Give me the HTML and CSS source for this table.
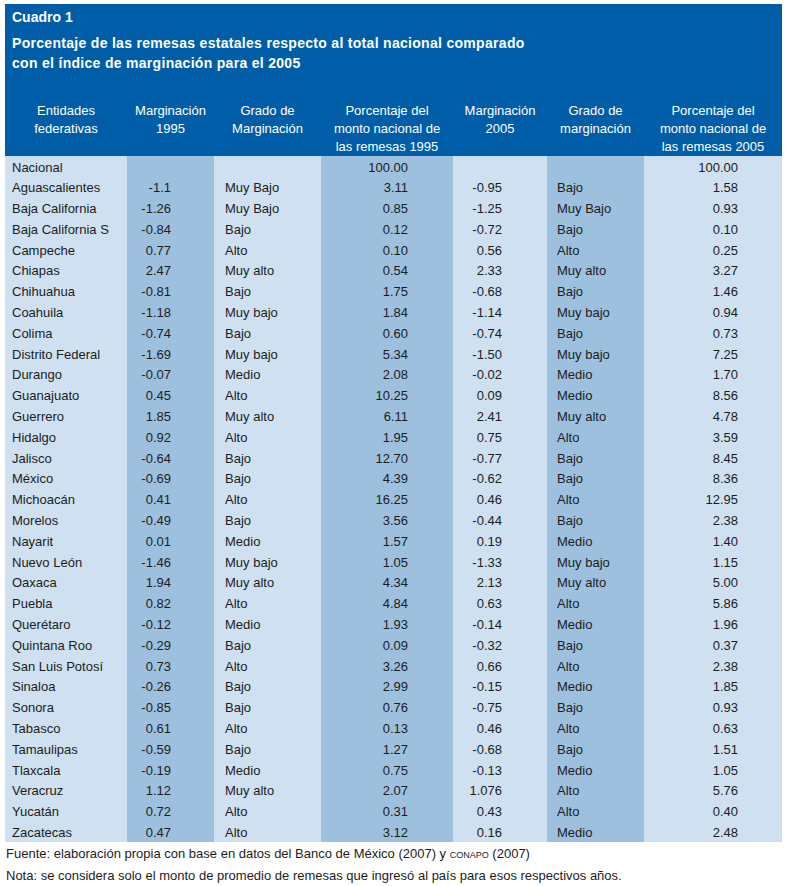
FILE: index.html
```html
<!DOCTYPE html>
<html lang="es">
<head>
<meta charset="utf-8">
<title>Cuadro 1</title>
<link rel="stylesheet" href="styles.css">
</head>
<body>
<div class="figure">
  <div class="title-block">
    <div class="label">Cuadro 1</div>
    <div class="title">Porcentaje de las remesas estatales respecto al total nacional comparado<br>con el índice de marginación para el 2005</div>
  </div>
  <table class="data">
    <colgroup>
      <col class="c1"><col class="c2"><col class="c3"><col class="c4"><col class="c5"><col class="c6"><col class="c7">
    </colgroup>
    <thead>
      <tr>
        <th>Entidades<br>federativas</th>
        <th>Marginación<br>1995</th>
        <th>Grado de<br>Marginación</th>
        <th>Porcentaje del<br>monto nacional de<br>las remesas 1995</th>
        <th>Marginación<br>2005</th>
        <th>Grado de<br>marginación</th>
        <th>Porcentaje del<br>monto nacional de<br>las remesas 2005</th>
      </tr>
    </thead>
    <tbody>
      <tr><td>Nacional</td><td></td><td></td><td>100.00</td><td></td><td></td><td>100.00</td></tr>
      <tr><td>Aguascalientes</td><td>-1.1</td><td>Muy Bajo</td><td>3.11</td><td>-0.95</td><td>Bajo</td><td>1.58</td></tr>
      <tr><td>Baja California</td><td>-1.26</td><td>Muy Bajo</td><td>0.85</td><td>-1.25</td><td>Muy Bajo</td><td>0.93</td></tr>
      <tr><td>Baja California S</td><td>-0.84</td><td>Bajo</td><td>0.12</td><td>-0.72</td><td>Bajo</td><td>0.10</td></tr>
      <tr><td>Campeche</td><td>0.77</td><td>Alto</td><td>0.10</td><td>0.56</td><td>Alto</td><td>0.25</td></tr>
      <tr><td>Chiapas</td><td>2.47</td><td>Muy alto</td><td>0.54</td><td>2.33</td><td>Muy alto</td><td>3.27</td></tr>
      <tr><td>Chihuahua</td><td>-0.81</td><td>Bajo</td><td>1.75</td><td>-0.68</td><td>Bajo</td><td>1.46</td></tr>
      <tr><td>Coahuila</td><td>-1.18</td><td>Muy bajo</td><td>1.84</td><td>-1.14</td><td>Muy bajo</td><td>0.94</td></tr>
      <tr><td>Colima</td><td>-0.74</td><td>Bajo</td><td>0.60</td><td>-0.74</td><td>Bajo</td><td>0.73</td></tr>
      <tr><td>Distrito Federal</td><td>-1.69</td><td>Muy bajo</td><td>5.34</td><td>-1.50</td><td>Muy bajo</td><td>7.25</td></tr>
      <tr><td>Durango</td><td>-0.07</td><td>Medio</td><td>2.08</td><td>-0.02</td><td>Medio</td><td>1.70</td></tr>
      <tr><td>Guanajuato</td><td>0.45</td><td>Alto</td><td>10.25</td><td>0.09</td><td>Medio</td><td>8.56</td></tr>
      <tr><td>Guerrero</td><td>1.85</td><td>Muy alto</td><td>6.11</td><td>2.41</td><td>Muy alto</td><td>4.78</td></tr>
      <tr><td>Hidalgo</td><td>0.92</td><td>Alto</td><td>1.95</td><td>0.75</td><td>Alto</td><td>3.59</td></tr>
      <tr><td>Jalisco</td><td>-0.64</td><td>Bajo</td><td>12.70</td><td>-0.77</td><td>Bajo</td><td>8.45</td></tr>
      <tr><td>México</td><td>-0.69</td><td>Bajo</td><td>4.39</td><td>-0.62</td><td>Bajo</td><td>8.36</td></tr>
      <tr><td>Michoacán</td><td>0.41</td><td>Alto</td><td>16.25</td><td>0.46</td><td>Alto</td><td>12.95</td></tr>
      <tr><td>Morelos</td><td>-0.49</td><td>Bajo</td><td>3.56</td><td>-0.44</td><td>Bajo</td><td>2.38</td></tr>
      <tr><td>Nayarit</td><td>0.01</td><td>Medio</td><td>1.57</td><td>0.19</td><td>Medio</td><td>1.40</td></tr>
      <tr><td>Nuevo León</td><td>-1.46</td><td>Muy bajo</td><td>1.05</td><td>-1.33</td><td>Muy bajo</td><td>1.15</td></tr>
      <tr><td>Oaxaca</td><td>1.94</td><td>Muy alto</td><td>4.34</td><td>2.13</td><td>Muy alto</td><td>5.00</td></tr>
      <tr><td>Puebla</td><td>0.82</td><td>Alto</td><td>4.84</td><td>0.63</td><td>Alto</td><td>5.86</td></tr>
      <tr><td>Querétaro</td><td>-0.12</td><td>Medio</td><td>1.93</td><td>-0.14</td><td>Medio</td><td>1.96</td></tr>
      <tr><td>Quintana Roo</td><td>-0.29</td><td>Bajo</td><td>0.09</td><td>-0.32</td><td>Bajo</td><td>0.37</td></tr>
      <tr><td>San Luis Potosí</td><td>0.73</td><td>Alto</td><td>3.26</td><td>0.66</td><td>Alto</td><td>2.38</td></tr>
      <tr><td>Sinaloa</td><td>-0.26</td><td>Bajo</td><td>2.99</td><td>-0.15</td><td>Medio</td><td>1.85</td></tr>
      <tr><td>Sonora</td><td>-0.85</td><td>Bajo</td><td>0.76</td><td>-0.75</td><td>Bajo</td><td>0.93</td></tr>
      <tr><td>Tabasco</td><td>0.61</td><td>Alto</td><td>0.13</td><td>0.46</td><td>Alto</td><td>0.63</td></tr>
      <tr><td>Tamaulipas</td><td>-0.59</td><td>Bajo</td><td>1.27</td><td>-0.68</td><td>Bajo</td><td>1.51</td></tr>
      <tr><td>Tlaxcala</td><td>-0.19</td><td>Medio</td><td>0.75</td><td>-0.13</td><td>Medio</td><td>1.05</td></tr>
      <tr><td>Veracruz</td><td>1.12</td><td>Muy alto</td><td>2.07</td><td>1.076</td><td>Alto</td><td>5.76</td></tr>
      <tr><td>Yucatán</td><td>0.72</td><td>Alto</td><td>0.31</td><td>0.43</td><td>Alto</td><td>0.40</td></tr>
      <tr><td>Zacatecas</td><td>0.47</td><td>Alto</td><td>3.12</td><td>0.16</td><td>Medio</td><td>2.48</td></tr>
    </tbody>
  </table>
  <div class="notes">
    <p>Fuente: elaboración propia con base en datos del Banco de México (2007) y <span class="sc">conapo</span> (2007)</p>
    <p>Nota: se considera solo el monto de promedio de remesas que ingresó al país para esos respectivos años.</p>
  </div>
</div>
</body>
</html>
```
FILE: styles.css
```css
html, body {
  margin: 0;
  padding: 0;
  background: #ffffff;
}
body {
  font-family: "Liberation Sans", Arial, Helvetica, sans-serif;
  font-size: 13px;
  color: #1c1c1c;
}
.figure {
  width: 777px;
  padding: 4px 0 0 5px;
}
.title-block {
  background: #005ea8;
  color: #ffffff;
  font-weight: bold;
  padding: 3px 7px 0 7px;
  height: 77px;
  box-sizing: border-box;
}
.label {
  font-size: 14px;
  line-height: 20px;
}
.title {
  font-size: 14px;
  letter-spacing: 0.3px;
  line-height: 20px;
  margin-top: 6px;
}
.data {
  width: 777px;
  border-collapse: collapse;
  table-layout: fixed;
}
.c1 { width: 122px; }
.c2 { width: 87px; }
.c3 { width: 107px; }
.c4 { width: 132px; }
.c5 { width: 94px; }
.c6 { width: 97px; }
.c7 { width: 138px; }
.data thead th {
  background: #005ea8;
  color: #ffffff;
  font-weight: normal;
  font-size: 13px;
  line-height: 18px;
  text-align: center;
  vertical-align: top;
  height: 53.5px;
  padding: 20.5px 0 0 0;
}
.data tbody td {
  height: 16.8px;
  padding: 4px 0 0 0;
  line-height: 16.8px;
  white-space: nowrap;
  background: #cfe1f0;
}
.data tbody td:nth-child(2),
.data tbody td:nth-child(4),
.data tbody td:nth-child(6) {
  background: #9cc0de;
}
.data tbody td:nth-child(1) { padding-left: 7px; }
.data tbody td:nth-child(2) { text-align: right; padding-right: 43px; }
.data tbody td:nth-child(3) { padding-left: 11px; }
.data tbody td:nth-child(4) { text-align: right; padding-right: 45px; }
.data tbody td:nth-child(5) { text-align: right; padding-right: 45px; }
.data tbody td:nth-child(6) { padding-left: 10px; }
.data tbody td:nth-child(7) { text-align: right; padding-right: 44px; }
.notes {
  margin-left: 1px;
  padding-top: 1px;
}
.notes p {
  margin: 0;
  line-height: 22.5px;
}
.sc {
  font-variant: small-caps;
}
```
